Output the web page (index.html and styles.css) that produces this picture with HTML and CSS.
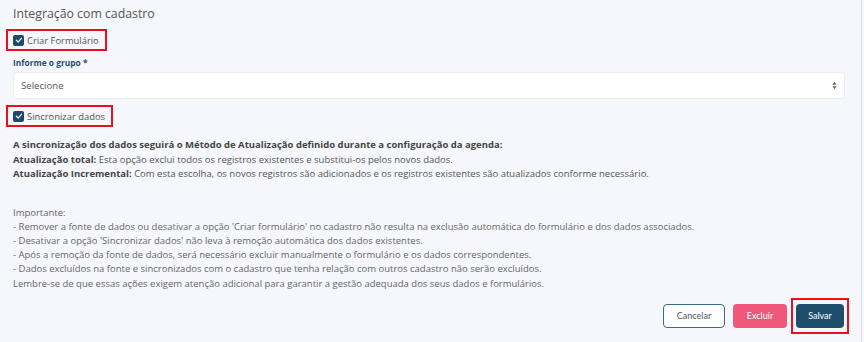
FILE: index.html
```html
<!DOCTYPE html>
<html lang="pt-BR">
<head>
  <meta charset="UTF-8">
  <title>Integração com cadastro</title>
  <link rel="stylesheet" href="styles.css">
</head>
<body>
  <main class="panel">
    <h2 class="title">Integração com cadastro</h2>

    <label class="check highlight">
      <span class="box"><svg viewBox="0 0 12 12" width="12" height="12"><path d="M2.8 6.2l2.2 2.2 4.2-4.6" fill="none" stroke="#fff" stroke-width="1.5" stroke-linecap="round" stroke-linejoin="round"/></svg></span>
      Criar Formulário
    </label>

    <div class="field">
      <label class="field-label">Informe o grupo *</label>
      <div class="select">
        <span>Selecione</span>
        <svg class="arrows" viewBox="0 0 6 10" width="5" height="9"><path d="M3 0.5L5.5 4H0.5z M3 9.5L0.5 6h5z" fill="#666"/></svg>
      </div>
    </div>

    <label class="check highlight">
      <span class="box"><svg viewBox="0 0 12 12" width="12" height="12"><path d="M2.8 6.2l2.2 2.2 4.2-4.6" fill="none" stroke="#fff" stroke-width="1.5" stroke-linecap="round" stroke-linejoin="round"/></svg></span>
      Sincronizar dados
    </label>

    <div class="info">
      <p><b>A sincronização dos dados seguirá o Método de Atualização definido durante a configuração da agenda:</b></p>
      <p><b>Atualização total:</b> Esta opção exclui todos os registros existentes e substitui-os pelos novos dados.</p>
      <p><b>Atualização Incremental:</b> Com esta escolha, os novos registros são adicionados e os registros existentes são atualizados conforme necessário.</p>
    </div>

    <div class="notes">
      <p>Importante:</p>
      <p>- Remover a fonte de dados ou desativar a opção 'Criar formulário' no cadastro não resulta na exclusão automática do formulário e dos dados associados.</p>
      <p>- Desativar a opção 'Sincronizar dados' não leva à remoção automática dos dados existentes.</p>
      <p>- Após a remoção da fonte de dados, será necessário excluir manualmente o formulário e os dados correspondentes.</p>
      <p>- Dados excluídos na fonte e sincronizados com o cadastro que tenha relação com outros cadastro não serão excluídos.</p>
      <p>Lembre-se de que essas ações exigem atenção adicional para garantir a gestão adequada dos seus dados e formulários.</p>
    </div>

    <div class="actions">
      <button class="btn btn-cancel">Cancelar</button>
      <button class="btn btn-delete">Excluir</button>
      <span class="save-wrap"><button class="btn btn-save">Salvar</button></span>
    </div>
  </main>
</body>
</html>
```

FILE: styles.css
```css
*{
  margin:0;
  padding:0;
  box-sizing:border-box;
}
body{
  background-color:#f6f7fc;
  font-family:"Open Sans", sans-serif;
  color:#595959;
  width:864px;
  height:342px;
  overflow:hidden;
}
.panel{
  width:862px;
  height:342px;
  border-right:1px solid #dcdde3;
  padding:4px 16px 0 13px;
}
.title{
  font-weight:400;
  font-size:12.3px;
  color:#555;
  line-height:20px;
}
.check{
  display:flex;
  width:max-content;
  align-items:center;
  gap:3px;
  font-size:9.4px;
  color:#555;
}
.highlight{
  border:2px solid #e8101d;
  margin-left:-7px;
  padding:0 6px 0 5px;
  height:22px;
  margin-top:5px;
}
.box{
  width:11px;
  height:11px;
  border-radius:2px;
  background-color:#1d4a66;
  display:flex;
  align-items:center;
  justify-content:center;
}
.box svg{
  width:10px;
  height:10px;
}
.field{
  margin-top:6px;
}
.field-label{
  display:block;
  font-size:8.4px;
  font-weight:700;
  color:#1d4f6e;
  line-height:12px;
}
.select{
  margin-top:3px;
  height:27px;
  background-color:#fff;
  border:1px solid #eceef2;
  border-radius:3px;
  display:flex;
  align-items:center;
  justify-content:space-between;
  padding:0 7px 0 7px;
  font-size:9.6px;
  color:#555;
}
.select + .x{
  display:none;
}
.field + .check{
  margin-top:6px;
}
.info{
  margin-top:11px;
  font-size:9.5px;
  line-height:14.5px;
  color:#555;
}
.info b{
  color:#444;
}
.notes{
  margin-top:24px;
  font-size:9.5px;
  line-height:14.2px;
  color:#666;
}
.actions{
  display:flex;
  justify-content:flex-end;
  align-items:center;
  gap:8px;
  margin-top:7px;
  margin-right:-4px;
}
.btn{
  height:24px;
  border-radius:4px;
  font-family:"Lato", sans-serif;
  font-size:9px;
  border:none;
}
.btn-cancel{
  width:62px;
  background-color:#fff;
  border:1px solid #3d6a88;
  color:#555;
}
.btn-delete{
  width:54px;
  background-color:#f0577a;
  color:#fff;
}
.save-wrap{
  border:2px solid #e8101d;
  padding:4px 3px;
  margin-left:-4px;
  display:flex;
}
.btn-save{
  width:48px;
  background-color:#1f4e6b;
  color:#fff;
}
```
